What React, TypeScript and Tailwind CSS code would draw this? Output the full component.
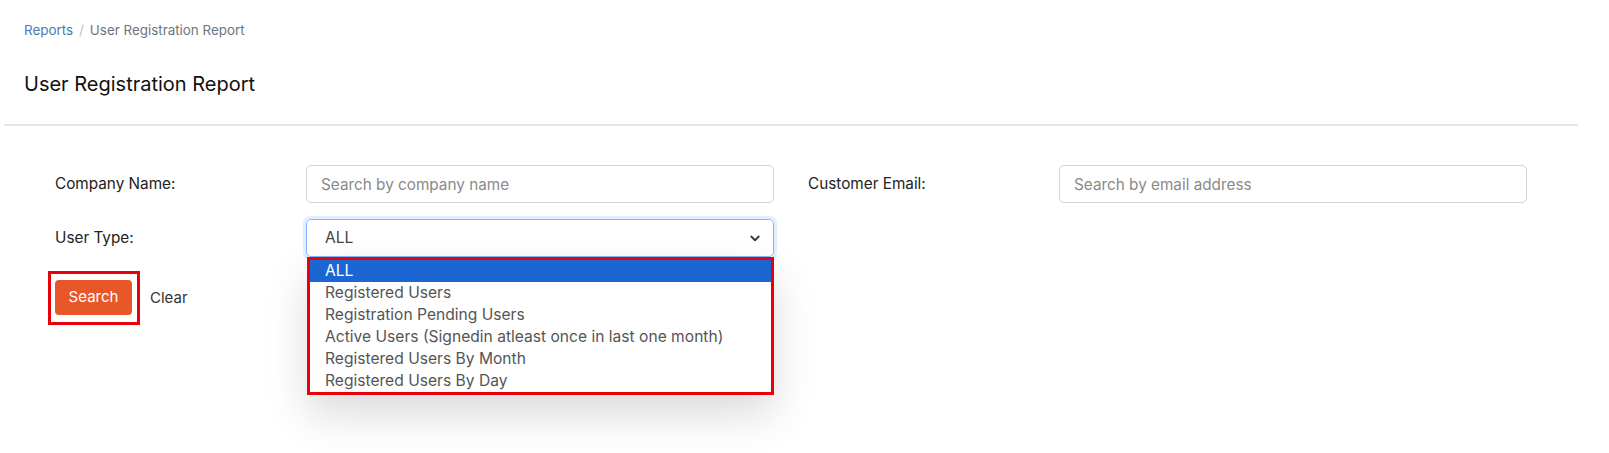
import { useState } from "react";

const options = [
  "ALL",
  "Registered Users",
  "Registration Pending Users",
  "Active Users (Signedin atleast once in last one month)",
  "Registered Users By Month",
  "Registered Users By Day",
];

function App() {
  const [company, setCompany] = useState("");
  const [email, setEmail] = useState("");
  const [userType, setUserType] = useState("ALL");

  return (
    <div className="min-h-screen bg-white text-[#212529] font-['Inter',sans-serif]">
      {/* breadcrumb */}
      <div className="px-6 pt-[21px] text-[13.4px] leading-[18px] flex gap-[6px]">
        <span className="text-[#4a7bb0]">Reports</span>
        <span className="text-[#c0c0c0]">/</span>
        <span className="text-[#6c757d]">User Registration Report</span>
      </div>

      <h1 className="px-6 mt-[33px] text-[20px] leading-6 text-[#111]">User Registration Report</h1>

      <div className="ml-1 mr-[31px] mt-[28px] h-[2px] bg-[#e6e6e6]" />

      {/* filters */}
      <div className="pl-[55px] pt-[39px]">
        <div className="grid grid-cols-[251px_468px_285px_468px] gap-y-4 items-center">
          <label className="text-[15.3px] text-[#222]">Company Name:</label>
          <input
            className="h-[38px] border border-[#ced4da] rounded-[5px] px-[14px] text-[15.3px] placeholder-[#8a8a8a] focus:outline-none"
            placeholder="Search by company name"
            value={company}
            onChange={(e) => setCompany(e.target.value)}
          />
          <label className="pl-[34px] text-[15.3px] text-[#222]">Customer Email:</label>
          <input
            className="h-[38px] border border-[#ced4da] rounded-[5px] px-[14px] text-[15.3px] placeholder-[#8a8a8a] focus:outline-none"
            placeholder="Search by email address"
            value={email}
            onChange={(e) => setEmail(e.target.value)}
          />

          <label className="text-[15.3px] text-[#222]">User Type:</label>
          <div className="relative">
            <div className="h-[38px] border border-[#86b7fe] rounded-[5px] shadow-[0_0_0_3px_rgba(13,110,253,0.12)] pl-[18px] pr-3 flex items-center justify-between text-[15.5px] text-[#444]">
              <span>{userType}</span>
              <svg width="12" height="12" viewBox="0 0 16 16" fill="none" stroke="#343a40" strokeWidth="2.4" strokeLinecap="round" strokeLinejoin="round">
                <path d="M3 6l5 5 5-5" />
              </svg>
            </div>
            {/* open dropdown list */}
            <div className="absolute left-px right-0 top-[38px] z-10 border-[3px] border-[#e8000b] bg-white shadow-[0_20px_40px_rgba(0,0,0,0.14)]">
              {options.map((o) => (
                <div
                  key={o}
                  onClick={() => setUserType(o)}
                  className={
                    o === userType
                      ? "h-[22px] pl-[15px] flex items-center text-[15.6px] bg-[#1b66d2] text-white"
                      : "h-[22px] pl-[15px] flex items-center text-[15.6px] text-[#555]"
                  }
                >
                  {o}
                </div>
              ))}
            </div>
          </div>
        </div>

        <div className="mt-[14px] ml-[-7px] flex items-center">
          <div className="border-[3px] border-[#e8000b] pt-[6px] pb-[7px] pl-1 pr-[5px]">
            <button className="bg-[#e8572a] text-white text-[15px] rounded-[4px] w-[77px] h-[35px]">
              Search
            </button>
          </div>
          <button className="ml-[10px] text-[15px] text-[#333]" onClick={() => { setCompany(""); setEmail(""); setUserType("ALL"); }}>
            Clear
          </button>
        </div>
      </div>
    </div>
  );
}

export default App;
